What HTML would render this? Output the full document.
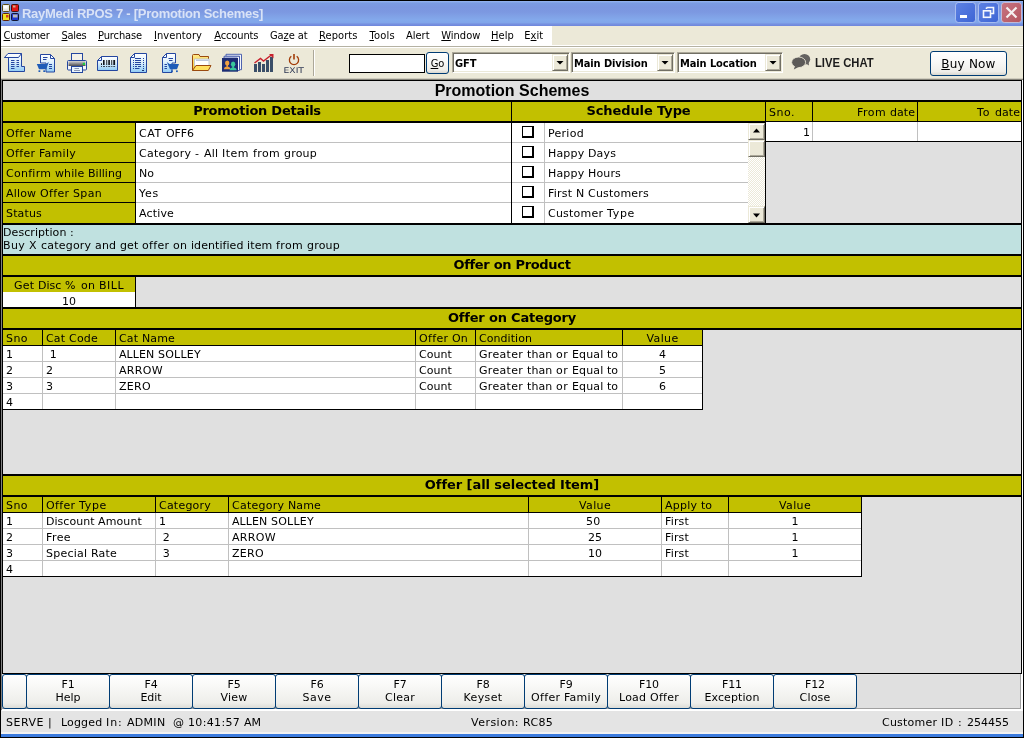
<!DOCTYPE html>
<html>
<head>
<meta charset="utf-8">
<title>RayMedi RPOS 7 - [Promotion Schemes]</title>
<style>
html,body{margin:0;padding:0;}
body{width:1024px;height:738px;overflow:hidden;position:relative;background:#E0E0E0;
  font-family:"DejaVu Sans","Liberation Sans",sans-serif;font-size:11px;color:#000;will-change:transform;}
.bx{position:absolute;box-sizing:border-box;}
.t{position:absolute;white-space:pre;font-size:11px;line-height:13px;}
.sh{position:absolute;white-space:pre;font:bold 13px/19px "DejaVu Sans","Liberation Sans",sans-serif;}
.mi{position:absolute;white-space:pre;top:29px;letter-spacing:-0.2px;font:11px/14px "DejaVu Sans Condensed","Liberation Sans",sans-serif;}
.mi u{text-decoration:underline;text-underline-offset:1px;}
.fb{position:absolute;box-sizing:border-box;top:674px;height:35px;border:1px solid #003C74;border-radius:3px;
  background:linear-gradient(#ffffff 0%,#f7f7f5 40%,#eeeeea 85%,#dcdcd6 100%);text-align:center;font-size:11px;line-height:13px;padding-top:3px;white-space:pre;}
svg{position:absolute;overflow:visible;}
.ttl{position:absolute;white-space:pre;left:22px;top:5px;font:bold 13px/18px "Liberation Sans",sans-serif;letter-spacing:-0.27px;color:#d9e3f7;}
.pst{position:absolute;white-space:pre;left:3px;top:81px;width:1018px;text-align:center;font:bold 16px/19px "Liberation Sans",sans-serif;}
.cb{position:absolute;box-sizing:border-box;height:21px;top:52px;background:#fff;border:1px solid;border-color:#ACA899 #fff #fff #ACA899;box-shadow:inset 1px 1px 0 #716F64,inset -1px -1px 0 #ECE9D8;}
.cbt{position:absolute;white-space:pre;top:57px;letter-spacing:-0.1px;font:bold 11px/14px "DejaVu Sans Condensed","Liberation Sans",sans-serif;}
.cbb{position:absolute;box-sizing:border-box;top:54px;width:16px;height:17px;background:#ECE9D8;border:1px solid;border-color:#ECE9D8 #716F64 #716F64 #ECE9D8;box-shadow:inset 1px 1px 0 #fff,inset -1px -1px 0 #ACA899;}
.xb{position:absolute;box-sizing:border-box;border:1px solid #003C74;border-radius:3px;background:linear-gradient(#ffffff 0%,#f8f8f6 45%,#efeee9 85%,#d9d8d0 100%);text-align:center;white-space:pre;}
.w{display:inline-block;white-space:pre;}

</style>
</head>
<body>
<div class="bx" style="left:0px;top:0px;width:1024px;height:26px;background:linear-gradient(#9AB8F3 0px,#86A8E9 1px,#7B9BE2 2.5px,#7B97E0 6px,#7C98E1 11px,#80A1E6 15px,#83A9EC 19px,#81A6EA 21.5px,#7892E1 23px,#6E86DC 25px);border-top:1px solid #000;"></div>
<div class="ttl">RayMedi RPOS 7 - [Promotion Schemes]</div>
<div class="bx" style="left:0px;top:26px;width:1024px;height:20px;background:#ECE9D8;"></div>
<div class="bx" style="left:0px;top:26px;width:552px;height:20px;background:#fff;"></div>
<div class="bx" style="left:552px;top:45px;width:472px;height:1px;background:#fff;"></div>
<div class="mi" style="left:3.5px;letter-spacing:-0.26px"><u>C</u>ustomer</div>
<div class="mi" style="left:61.5px;letter-spacing:-0.28px"><u>S</u>ales</div>
<div class="mi" style="left:98px;letter-spacing:-0.11px"><u>P</u>urchase</div>
<div class="mi" style="left:154px;letter-spacing:0.08px"><u>I</u>nventory</div>
<div class="mi" style="left:214.3px;letter-spacing:-0.14px"><u>A</u>ccounts</div>
<div class="mi" style="left:270px;letter-spacing:-0.09px">Ga<u>z</u>e at</div>
<div class="mi" style="left:319px;letter-spacing:0.09px"><u>R</u>eports</div>
<div class="mi" style="left:369.5px;letter-spacing:0.26px"><u>T</u>ools</div>
<div class="mi" style="left:406px;letter-spacing:0px">Alert</div>
<div class="mi" style="left:441.3px;letter-spacing:0px"><u>W</u>indow</div>
<div class="mi" style="left:491px;letter-spacing:0.1px"><u>H</u>elp</div>
<div class="mi" style="left:524.3px;letter-spacing:0.05px">E<u>x</u>it</div>
<div class="bx" style="left:0px;top:46px;width:1024px;height:34px;background:#ECE9D8;border-top:1px solid #b5b2a3;box-shadow:inset 0 1px 0 #fff;"></div>
<div class="bx" style="left:0px;top:78px;width:1024px;height:1px;background:#CFCCBE;"></div>
<div class="bx" style="left:0px;top:79px;width:1024px;height:1px;background:#85837A;"></div>
<svg style="left:2px;top:4px" width="17" height="17" viewBox="0 0 17 17">
<rect x="0.5" y="0.5" width="7" height="7" rx="1" fill="#e8e8e0" stroke="#5a4a10"/>
<rect x="9.5" y="0.5" width="7" height="7" rx="1" fill="#e01818" stroke="#40100c"/>
<rect x="0.5" y="9.5" width="7" height="7" rx="1" fill="#f0e020" stroke="#60200c"/>
<rect x="9.5" y="9.5" width="7" height="7" rx="1" fill="#2038d0" stroke="#101430"/>
<rect x="11" y="10.5" width="4.5" height="3" fill="#b8b8b8"/>
<rect x="1.5" y="1.5" width="4" height="3" fill="#fff"/>
<rect x="11" y="1.5" width="2.5" height="2" fill="#c8b090"/>
<rect x="4" y="11" width="2.5" height="2.5" fill="#d04020"/>
</svg>
<svg style="left:955px;top:2px" width="21" height="21" viewBox="0 0 21 21"><defs><linearGradient id="g955" x1="0" y1="0" x2="1" y2="1"><stop offset="0" stop-color="#5d82e4"/><stop offset="1" stop-color="#3d64d4"/></linearGradient></defs><rect x="0.5" y="0.5" width="20" height="20" rx="3" fill="url(#g955)" stroke="#dfe8fb" stroke-opacity="0.55"/><rect x="5" y="13" width="7" height="3" fill="#ffffff"/></svg>
<svg style="left:978px;top:2px" width="21" height="21" viewBox="0 0 21 21"><defs><linearGradient id="g978" x1="0" y1="0" x2="1" y2="1"><stop offset="0" stop-color="#5d82e4"/><stop offset="1" stop-color="#3d64d4"/></linearGradient></defs><rect x="0.5" y="0.5" width="20" height="20" rx="3" fill="url(#g978)" stroke="#dfe8fb" stroke-opacity="0.55"/><path d="M8.5 5.500 H15.500 V11.500 H13 M8.500 7 V5.500" fill="none" stroke="#f4f7fd" stroke-width="1.6"/><rect x="5.5" y="8.800" width="7" height="6.500" fill="none" stroke="#f4f7fd" stroke-width="1.6"/></svg>
<svg style="left:1001px;top:2px" width="21" height="21" viewBox="0 0 21 21"><defs><linearGradient id="g1001" x1="0" y1="0" x2="1" y2="1"><stop offset="0" stop-color="#c87482"/><stop offset="1" stop-color="#b4545e"/></linearGradient></defs><rect x="0.5" y="0.5" width="20" height="20" rx="3" fill="url(#g1001)" stroke="#dfe8fb" stroke-opacity="0.55"/><path d="M5.500 5.500 L15.500 15.500 M15.500 5.500 L5.500 15.500" stroke="#f6f0f0" stroke-width="2.2" fill="none"/></svg>
<svg style="left:0px;top:46px" width="330" height="34" viewBox="0 46 330 34">
<defs>
<linearGradient id="lb" x1="0" y1="0" x2="0" y2="1"><stop offset="0" stop-color="#ffffff"/><stop offset="0.45" stop-color="#dff0fc"/><stop offset="1" stop-color="#8fcbf5"/></linearGradient>
<linearGradient id="pg" x1="0" y1="0" x2="0" y2="1"><stop offset="0" stop-color="#d4d4d6"/><stop offset="1" stop-color="#4c4c50"/></linearGradient>
<linearGradient id="fy" x1="0" y1="0" x2="0" y2="1"><stop offset="0" stop-color="#ffe98a"/><stop offset="1" stop-color="#f8c830"/></linearGradient>
</defs>
<!-- 1 scroll -->
<path d="M8.500 57.500 V71.500 H24.500 V66.500 H21.500 V53.500 H8 L4.500 57.500 Z" fill="url(#lb)" stroke="#2446A0" stroke-linejoin="round"/>
<path d="M4.500 57.500 H18.500 L21.500 53.500" fill="none" stroke="#2446A0"/>
<path d="M11 60.500 H14.500 M16.500 60.500 H19 M11 62.500 H14.500 M16.500 62.500 H19 M11 64.500 H14.500 M16.500 64.500 H19 M11 66.500 H14.500 M16.500 66.500 H19 M11 68.500 H14.500" stroke="#2446A0"/>
<!-- 2 doc + cart -->
<path d="M40.500 54.500 H50.500 L54.500 58.500 V72 H46 V63 H40.500 Z" fill="url(#lb)" stroke="#2446A0"/>
<path d="M50.500 54.500 V58.500 H54.500" fill="none" stroke="#2446A0"/>
<path d="M43 57.500 H47.500 M43 59.500 H46.500 M49 64.500 H52 M49 66.500 H52 M49 68.500 H52" stroke="#2446A0"/>
<path d="M36.800 64 H46 L48.800 62 L46.200 69.300 H39 Z" fill="#1F5CB8"/>
<rect x="38.500" y="70.300" width="1.800" height="1.700" fill="#1F5CB8"/><rect x="43.300" y="70.300" width="1.800" height="1.700" fill="#1F5CB8"/>
<!-- 3 printer -->
<rect x="71.500" y="53.500" width="11" height="8" fill="#F3F1E8" stroke="#2446A0"/>
<rect x="67.500" y="60.500" width="19" height="9.500" rx="1" fill="#f4f6fa" stroke="#2446A0"/>
<rect x="68.500" y="61" width="17" height="5" fill="url(#pg)"/>
<rect x="71.500" y="60" width="11" height="1" fill="#2446A0"/>
<rect x="82.800" y="62.800" width="2.200" height="2.200" fill="#20cc40"/>
<rect x="71.500" y="66.500" width="11" height="6" fill="#eaf5fd" stroke="#2446A0"/>
<path d="M74.500 68.500 H79 M74 70.500 H80" stroke="#8c98b4"/>
<!-- 4 barcode -->
<path d="M101.500 56.500 H117.500 V70.500 H97.500 V60.500 Z" fill="url(#lb)" stroke="#2446A0" stroke-linejoin="round"/>
<path d="M101.500 56.500 V60.500 H97.500" fill="none" stroke="#2446A0"/>
<path d="M103 60 h1.600 v5 h-1.600 Z M106.300 60 h0.900 v5 h-0.900 Z M108.300 60 h1.600 v5 h-1.600 Z M111.300 60 h0.900 v5 h-0.900 Z M113.300 60 h1.800 v5 h-1.800 Z M101 63.200 h1 v1.800 h-1 Z" fill="#10141c"/>
<path d="M101 66.200 h1 v0.900 h-1 Z M103 66.200 h2 v0.900 h-2 Z M106 66.200 h1.200 v0.900 h-1.200 Z M108.200 66.200 h2 v0.900 h-2 Z M111.200 66.200 h1.200 v0.900 h-1.200 Z M113.300 66.200 h1.800 v0.900 h-1.800 Z" fill="#10141c"/>
<!-- 5 doc list -->
<path d="M134.500 53.500 H146.500 V72.500 H130.500 V57.500 Z" fill="url(#lb)" stroke="#2446A0"/>
<path d="M134.500 53.500 V57.500 H130.500" fill="none" stroke="#2446A0"/>
<path d="M135 58.500 H141 M135 60.500 H141 M135 62.500 H141 M135 64.500 H141 M135 66.500 H137 M138 66.500 H141 M135 68.500 H139.500" stroke="#2446A0"/>
<path d="M133 60.500 h1 M133 62.500 h1 M133 64.500 h1 M133 66.500 h1 M133 68.500 h1 M143 58.500 h1 M143 60.500 h1 M143 62.500 h1 M143 64.500 h1 M143 66.500 h1 M143 68.500 h1" stroke="#2446A0"/>
<path d="M142 70.500 H144" stroke="#1a3070"/>
<!-- 6 doc + cart right -->
<path d="M166.500 53.500 H175.500 V63 H172 V72.500 H162.500 V57.500 Z" fill="url(#lb)" stroke="#2446A0"/>
<path d="M166.500 53.500 V57.500 H162.500" fill="none" stroke="#2446A0"/>
<path d="M168.500 58.500 H173 M169 60.500 H172.500 M164.500 64.500 H167 M164.500 66.500 H167 M164.500 68.500 H167" stroke="#2446A0"/>
<path d="M166.800 62 L169.500 64 H179 L177 69.300 H170 Z" fill="#1F5CB8"/>
<rect x="171" y="70.400" width="1.800" height="1.700" fill="#1F5CB8"/><rect x="176" y="70.400" width="1.800" height="1.700" fill="#1F5CB8"/>
<!-- 7 folder -->
<path d="M192.500 70.500 V55.500 Q192.500 54.500 193.500 54.500 H199 L200 56.500 H208.500 V62" fill="url(#fy)" stroke="#9A4A10"/>
<path d="M194.500 59 H209 V66 H194.500 Z" fill="#fff" stroke="#b4c0d4" stroke-width="0.800"/>
<path d="M196 60.300 H208.500" stroke="#98a8c8" stroke-width="0.800"/>
<path d="M192.500 70.500 L196 65.500 H211 L208.300 70.500 Z" fill="#ffe060" stroke="#9A4A10" stroke-linejoin="round"/>
<!-- 8 users -->
<path d="M226 54.300 H241.500 V69.700 H239.500 V56.300 H226 Z" fill="#f4f6fc" stroke="#3C54A8" stroke-width="0.900"/>
<path d="M224 56.300 H239.500 V70.500 H237.500 V58 H224 Z" fill="#f4f6fc" stroke="#3C54A8" stroke-width="0.900"/>
<rect x="222" y="58" width="16" height="13.700" fill="#1C2C74"/>
<ellipse cx="227.200" cy="63" rx="2.200" ry="2.600" fill="#F0A040"/><path d="M226.400 65 h1.600 v1.800 h-1.600 Z" fill="#F0A040"/><path d="M224 69.300 Q224 66.600 227.200 66.600 Q230.200 66.600 230.200 69.300 Z" fill="#F0A040"/>
<ellipse cx="233.100" cy="64.200" rx="2.200" ry="2.600" fill="#38C89C"/><path d="M232.300 66 h1.600 v2 h-1.600 Z" fill="#38C89C"/><path d="M229.600 70.300 Q229.600 67.600 233.100 67.600 Q236.600 67.600 236.600 70.300 Z" fill="#38C89C"/>
<!-- 9 chart -->
<path d="M255.500 72 V64 M259.500 72 V62 M263.500 72 V64 M267.500 72 V60 M271.500 72 V57" stroke="#3A4E68" stroke-width="3"/>
<path d="M254.500 63 L260.500 58.500 L263.500 61 L272 54.500" fill="none" stroke="#C8202C" stroke-width="1.400"/>
<path d="M269 54 H273.500 V58.500 Z" fill="#C8202C"/>
<!-- 10 exit -->
<path d="M291.300 56.300 A4.600 4.600 0 1 0 296.700 56.300" fill="none" stroke="#A23C08" stroke-width="1.300"/>
<path d="M294 54 V59.500" stroke="#A23C08" stroke-width="1.600"/>
<text x="283.500" y="73" font-family="'DejaVu Sans','Liberation Sans',sans-serif" font-size="7.800" fill="#2c3652" textLength="20.500" lengthAdjust="spacingAndGlyphs">EXIT</text>
<!-- separator -->
<path d="M313.500 50 V76" stroke="#ACA899"/><path d="M314.500 50 V76" stroke="#fff"/>
</svg>
<div class="bx" style="left:349px;top:54px;width:76px;height:19px;background:#fff;border:1px solid #000;"></div>
<div class="xb" style="left:426px;top:52px;width:23px;height:22px;font:11px/21px 'DejaVu Sans Condensed','Liberation Sans',sans-serif;"><u>G</u>o</div>
<div class="cb" style="left:452px;width:118px;"></div>
<div class="cbt" style="left:455px;">GFT</div>
<div class="cbb" style="left:552px;"></div>
<svg style="left:552px;top:54px" width="16" height="17"><path d="M4.5 7 H11.500 L8 10.500 Z" fill="#000"/></svg>
<div class="cb" style="left:571px;width:104px;"></div>
<div class="cbt" style="left:574px;">Main Division</div>
<div class="cbb" style="left:657px;"></div>
<svg style="left:657px;top:54px" width="16" height="17"><path d="M4.5 7 H11.500 L8 10.500 Z" fill="#000"/></svg>
<div class="cb" style="left:677px;width:106px;"></div>
<div class="cbt" style="left:680px;">Main Location</div>
<div class="cbb" style="left:765px;"></div>
<svg style="left:765px;top:54px" width="16" height="17"><path d="M4.5 7 H11.500 L8 10.500 Z" fill="#000"/></svg>
<svg style="left:790px;top:52px" width="24" height="22" viewBox="790 52 24 22">
<ellipse cx="804.500" cy="59.200" rx="5.700" ry="5.300" fill="#646260"/><path d="M805 63 L809 65.600 L808.500 61 Z" fill="#646260"/>
<ellipse cx="798.600" cy="62.300" rx="7" ry="5.300" fill="#5c5a58" stroke="#ECE9D8" stroke-width="0.900"/><path d="M795 66 L793.800 69.500 L799 66.800 Z" fill="#5c5a58"/>
</svg>
<div class="t" style="left:815px;top:56px;font:bold 12.5px/15px 'Liberation Sans',sans-serif;color:#1c1c1c;transform-origin:0 0;transform:scaleX(0.9);">LIVE CHAT</div>
<div class="xb" style="left:930px;top:51px;width:77px;height:25px;font:12px/24px 'DejaVu Sans','Liberation Sans',sans-serif;letter-spacing:0.2px;"><u>B</u>uy Now</div>
<div class="bx" style="left:2px;top:80px;width:1020px;height:594px;background:#E0E0E0;border:1px solid #000;"></div>
<div class="bx" style="left:1px;top:79px;width:1px;height:631px;background:#808080;"></div>
<div class="bx" style="left:1022px;top:80px;width:1px;height:631px;background:#fff;"></div>
<div class="pst">Promotion Schemes</div>
<div class="bx" style="left:3px;top:100px;width:1018px;height:2px;background:#000;"></div>
<div class="bx" style="left:3px;top:102px;width:1018px;height:19px;background:#C2C000;"></div>
<div class="sh" style="left:3px;top:101px;width:508px;text-align:center;letter-spacing:-0.25px;">Promotion Details</div>
<div class="sh" style="left:512px;top:101px;width:253px;text-align:center;letter-spacing:-0.1px;">Schedule Type</div>
<div class="t" style="left:769px;top:106px;"><span class="w" style="width:26px;letter-spacing:0.500px">Sno.</span></div>
<div class="t" style="left:813px;top:106px;width:102px;text-align:right;"><span class="w" style="width:33px;letter-spacing:0.447px">From </span><span class="w" style="width:25px;letter-spacing:0.051px">date</span></div>
<div class="t" style="left:918px;top:106px;width:102px;text-align:right;"><span class="w" style="width:18px;letter-spacing:0.974px">To </span><span class="w" style="width:25px;letter-spacing:0.051px">date</span></div>
<div class="bx" style="left:511px;top:102px;width:1px;height:122px;background:#000;"></div>
<div class="bx" style="left:765px;top:102px;width:1px;height:122px;background:#000;"></div>
<div class="bx" style="left:812px;top:102px;width:1px;height:19px;background:#000;"></div>
<div class="bx" style="left:917px;top:102px;width:1px;height:19px;background:#000;"></div>
<div class="bx" style="left:3px;top:121px;width:763px;height:2px;background:#000;"></div>
<div class="bx" style="left:766px;top:121px;width:255px;height:1px;background:#000;"></div>
<div class="bx" style="left:3px;top:123px;width:132px;height:100px;background:#C2C000;"></div>
<div class="bx" style="left:135px;top:123px;width:1px;height:100px;background:#000;"></div>
<div class="bx" style="left:136px;top:123px;width:375px;height:100px;background:#fff;"></div>
<div class="bx" style="left:512px;top:123px;width:236px;height:100px;background:#fff;"></div>
<div class="bx" style="left:544px;top:123px;width:1px;height:100px;background:#C0C0C0;"></div>
<div class="bx" style="left:3px;top:142px;width:133px;height:1px;background:#000;"></div>
<div class="bx" style="left:136px;top:142px;width:375px;height:1px;background:#C0C0C0;"></div>
<div class="bx" style="left:512px;top:142px;width:236px;height:1px;background:#C0C0C0;"></div>
<div class="t" style="left:6px;top:127px;"><span class="w" style="width:33px;letter-spacing:0.331px">Offer </span><span class="w" style="width:33px;letter-spacing:0.137px">Name</span></div>
<div class="t" style="left:139px;top:127px;"><span class="w" style="width:27px;letter-spacing:0.605px">CAT </span><span class="w" style="width:28px;letter-spacing:-0.078px">OFF6</span></div>
<div class="t" style="left:548px;top:127px;"><span class="w" style="width:36px;letter-spacing:0.281px">Period</span></div>
<div class="bx" style="left:522px;top:126px;width:12px;height:12px;background:#fff;border:1px solid #000;border-right-width:2px;border-bottom-width:2px;"></div>
<div class="bx" style="left:3px;top:162px;width:133px;height:1px;background:#000;"></div>
<div class="bx" style="left:136px;top:162px;width:375px;height:1px;background:#C0C0C0;"></div>
<div class="bx" style="left:512px;top:162px;width:236px;height:1px;background:#C0C0C0;"></div>
<div class="t" style="left:6px;top:147px;"><span class="w" style="width:33px;letter-spacing:0.331px">Offer </span><span class="w" style="width:37px;letter-spacing:0.266px">Family</span></div>
<div class="t" style="left:139px;top:147px;"><span class="w" style="width:56px;letter-spacing:0.250px">Category </span><span class="w" style="width:9px;letter-spacing:0.766px">- </span><span class="w" style="width:18px;letter-spacing:0.211px">All </span><span class="w" style="width:31px;letter-spacing:0.491px">Item </span><span class="w" style="width:31px;letter-spacing:0.378px">from </span><span class="w" style="width:33px;letter-spacing:0.209px">group</span></div>
<div class="t" style="left:548px;top:147px;"><span class="w" style="width:40px;letter-spacing:0.169px">Happy </span><span class="w" style="width:28px;letter-spacing:0.137px">Days</span></div>
<div class="bx" style="left:522px;top:146px;width:12px;height:12px;background:#fff;border:1px solid #000;border-right-width:2px;border-bottom-width:2px;"></div>
<div class="bx" style="left:3px;top:182px;width:133px;height:1px;background:#000;"></div>
<div class="bx" style="left:136px;top:182px;width:375px;height:1px;background:#C0C0C0;"></div>
<div class="bx" style="left:512px;top:182px;width:236px;height:1px;background:#C0C0C0;"></div>
<div class="t" style="left:6px;top:167px;"><span class="w" style="width:49px;letter-spacing:0.268px">Confirm </span><span class="w" style="width:33px;letter-spacing:0.107px">while </span><span class="w" style="width:34px;letter-spacing:0.036px">Billing</span></div>
<div class="t" style="left:139px;top:167px;"><span class="w" style="width:15px;letter-spacing:0.016px">No</span></div>
<div class="t" style="left:548px;top:167px;"><span class="w" style="width:40px;letter-spacing:0.169px">Happy </span><span class="w" style="width:33px;letter-spacing:0.156px">Hours</span></div>
<div class="bx" style="left:522px;top:166px;width:12px;height:12px;background:#fff;border:1px solid #000;border-right-width:2px;border-bottom-width:2px;"></div>
<div class="bx" style="left:3px;top:202px;width:133px;height:1px;background:#000;"></div>
<div class="bx" style="left:136px;top:202px;width:375px;height:1px;background:#C0C0C0;"></div>
<div class="bx" style="left:512px;top:202px;width:236px;height:1px;background:#C0C0C0;"></div>
<div class="t" style="left:6px;top:187px;"><span class="w" style="width:34px;letter-spacing:0.185px">Allow </span><span class="w" style="width:33px;letter-spacing:0.331px">Offer </span><span class="w" style="width:29px;letter-spacing:0.332px">Span</span></div>
<div class="t" style="left:139px;top:187px;"><span class="w" style="width:20px;letter-spacing:0.745px">Yes</span></div>
<div class="t" style="left:548px;top:187px;"><span class="w" style="width:28px;letter-spacing:0.224px">First </span><span class="w" style="width:12px;letter-spacing:0.133px">N </span><span class="w" style="width:61px;letter-spacing:0.203px">Customers</span></div>
<div class="bx" style="left:522px;top:186px;width:12px;height:12px;background:#fff;border:1px solid #000;border-right-width:2px;border-bottom-width:2px;"></div>
<div class="t" style="left:6px;top:207px;"><span class="w" style="width:36px;letter-spacing:0.159px">Status</span></div>
<div class="t" style="left:139px;top:207px;"><span class="w" style="width:35px;letter-spacing:0.159px">Active</span></div>
<div class="t" style="left:548px;top:207px;"><span class="w" style="width:59px;letter-spacing:0.229px">Customer </span><span class="w" style="width:28px;letter-spacing:0.684px">Type</span></div>
<div class="bx" style="left:522px;top:206px;width:12px;height:12px;background:#fff;border:1px solid #000;border-right-width:2px;border-bottom-width:2px;"></div>
<div class="bx" style="left:748px;top:123px;width:17px;height:100px;background:#F4F3EC;background-image:repeating-conic-gradient(#ffffff 0% 25%,#ECE9D8 0% 50%);background-size:2px 2px;"></div>
<div class="bx" style="left:748px;top:123px;width:17px;height:17px;background:#ECE9D8;border:1px solid;border-color:#ECE9D8 #716F64 #716F64 #ECE9D8;box-shadow:inset 1px 1px 0 #fff,inset -1px -1px 0 #ACA899;"></div>
<div class="bx" style="left:748px;top:140px;width:17px;height:17px;background:#ECE9D8;border:1px solid;border-color:#ECE9D8 #716F64 #716F64 #ECE9D8;box-shadow:inset 1px 1px 0 #fff,inset -1px -1px 0 #ACA899;"></div>
<div class="bx" style="left:748px;top:206px;width:17px;height:17px;background:#ECE9D8;border:1px solid;border-color:#ECE9D8 #716F64 #716F64 #ECE9D8;box-shadow:inset 1px 1px 0 #fff,inset -1px -1px 0 #ACA899;"></div>
<svg style="left:748px;top:123px" width="17" height="17"><path d="M5 9.5 L8.5 5.5 L12 9.5 Z" fill="#000"/></svg>
<svg style="left:748px;top:206px" width="17" height="17"><path d="M5 7.5 L8.5 11.5 L12 7.5 Z" fill="#000"/></svg>
<div class="bx" style="left:766px;top:122px;width:255px;height:19px;background:#fff;"></div>
<div class="bx" style="left:812px;top:122px;width:1px;height:19px;background:#C0C0C0;"></div>
<div class="bx" style="left:917px;top:122px;width:1px;height:19px;background:#C0C0C0;"></div>
<div class="bx" style="left:766px;top:141px;width:255px;height:1px;background:#000;"></div>
<div class="t" style="left:766px;top:126px;width:44px;text-align:right;"><span class="w" style="width:7px;letter-spacing:0.000px">1</span></div>
<div class="bx" style="left:3px;top:223px;width:1018px;height:2px;background:#000;"></div>
<div class="bx" style="left:3px;top:225px;width:1018px;height:29px;background:#C0E1E0;"></div>
<div class="t" style="left:3px;top:226px;"><span class="w" style="width:67px;letter-spacing:0.070px">Description </span><span class="w" style="width:5px;letter-spacing:1.297px">:</span></div>
<div class="t" style="left:3px;top:239px;"><span class="w" style="width:26px;letter-spacing:0.367px">Buy </span><span class="w" style="width:12px;letter-spacing:0.484px">X </span><span class="w" style="width:54px;letter-spacing:0.210px">category </span><span class="w" style="width:25px;letter-spacing:0.203px">and </span><span class="w" style="width:22px;letter-spacing:0.109px">get </span><span class="w" style="width:31px;letter-spacing:0.318px">offer </span><span class="w" style="width:18px;letter-spacing:0.266px">on </span><span class="w" style="width:56px;letter-spacing:0.061px">identified </span><span class="w" style="width:29px;letter-spacing:0.128px">item </span><span class="w" style="width:31px;letter-spacing:0.378px">from </span><span class="w" style="width:33px;letter-spacing:0.209px">group</span></div>
<div class="bx" style="left:3px;top:254px;width:1018px;height:2px;background:#000;"></div>
<div class="bx" style="left:3px;top:256px;width:1018px;height:19px;background:#C2C000;"></div>
<div class="sh" style="left:3px;top:255px;width:1018px;text-align:center;letter-spacing:-0.32px;">Offer on Product</div>
<div class="bx" style="left:3px;top:275px;width:1018px;height:2px;background:#000;"></div>
<div class="bx" style="left:3px;top:277px;width:132px;height:15px;background:#C2C000;"></div>
<div class="bx" style="left:3px;top:292px;width:132px;height:15px;background:#fff;"></div>
<div class="bx" style="left:135px;top:277px;width:1px;height:30px;background:#000;"></div>
<div class="t" style="left:3px;top:279px;width:132px;text-align:center;"><span class="w" style="width:24px;letter-spacing:0.223px">Get </span><span class="w" style="width:27px;letter-spacing:0.037px">Disc </span><span class="w" style="width:16px;letter-spacing:1.023px">% </span><span class="w" style="width:18px;letter-spacing:0.266px">on </span><span class="w" style="width:25px;letter-spacing:0.488px">BILL</span></div>
<div class="t" style="left:3px;top:295px;width:132px;text-align:center;"><span class="w" style="width:14px;letter-spacing:0.000px">10</span></div>
<div class="bx" style="left:3px;top:307px;width:1018px;height:2px;background:#000;"></div>
<div class="bx" style="left:3px;top:309px;width:1018px;height:19px;background:#C2C000;"></div>
<div class="sh" style="left:3px;top:308px;width:1018px;text-align:center;letter-spacing:-0.18px;">Offer on Category</div>
<div class="bx" style="left:3px;top:328px;width:1018px;height:2px;background:#000;"></div>
<div class="bx" style="left:3px;top:330px;width:699px;height:15px;background:#C2C000;"></div>
<div class="bx" style="left:3px;top:345px;width:699px;height:64px;background:#fff;"></div>
<div class="bx" style="left:42px;top:330px;width:1px;height:15px;background:#000;"></div>
<div class="bx" style="left:42px;top:345px;width:1px;height:64px;background:#C0C0C0;"></div>
<div class="bx" style="left:115px;top:330px;width:1px;height:15px;background:#000;"></div>
<div class="bx" style="left:115px;top:345px;width:1px;height:64px;background:#C0C0C0;"></div>
<div class="bx" style="left:415px;top:330px;width:1px;height:15px;background:#000;"></div>
<div class="bx" style="left:415px;top:345px;width:1px;height:64px;background:#C0C0C0;"></div>
<div class="bx" style="left:475px;top:330px;width:1px;height:15px;background:#000;"></div>
<div class="bx" style="left:475px;top:345px;width:1px;height:64px;background:#C0C0C0;"></div>
<div class="bx" style="left:622px;top:330px;width:1px;height:15px;background:#000;"></div>
<div class="bx" style="left:622px;top:345px;width:1px;height:64px;background:#C0C0C0;"></div>
<div class="bx" style="left:3px;top:361px;width:699px;height:1px;background:#C0C0C0;"></div>
<div class="bx" style="left:3px;top:377px;width:699px;height:1px;background:#C0C0C0;"></div>
<div class="bx" style="left:3px;top:393px;width:699px;height:1px;background:#C0C0C0;"></div>
<div class="bx" style="left:3px;top:345px;width:699px;height:1px;background:#000;"></div>
<div class="bx" style="left:702px;top:330px;width:1px;height:80px;background:#000;"></div>
<div class="bx" style="left:3px;top:409px;width:700px;height:1px;background:#000;"></div>
<div class="t" style="left:6px;top:332px;"><span class="w" style="width:22px;letter-spacing:0.438px">Sno</span></div>
<div class="t" style="left:46px;top:332px;"><span class="w" style="width:23px;letter-spacing:0.191px">Cat </span><span class="w" style="width:29px;letter-spacing:0.207px">Code</span></div>
<div class="t" style="left:119px;top:332px;"><span class="w" style="width:23px;letter-spacing:0.191px">Cat </span><span class="w" style="width:33px;letter-spacing:0.137px">Name</span></div>
<div class="t" style="left:419px;top:332px;"><span class="w" style="width:33px;letter-spacing:0.331px">Offer </span><span class="w" style="width:16px;letter-spacing:0.188px">On</span></div>
<div class="t" style="left:479px;top:332px;"><span class="w" style="width:53px;letter-spacing:0.054px">Condition</span></div>
<div class="t" style="left:623px;top:332px;width:79px;text-align:center;"><span class="w" style="width:32px;letter-spacing:0.359px">Value</span></div>
<div class="t" style="left:6px;top:348px;"><span class="w" style="width:7px;letter-spacing:0.000px">1</span></div>
<div class="t" style="left:46px;top:348px;"><span class="w" style="width:11px;letter-spacing:0.250px"> 1</span></div>
<div class="t" style="left:119px;top:348px;"><span class="w" style="width:39px;letter-spacing:0.089px">ALLEN </span><span class="w" style="width:43px;letter-spacing:0.240px">SOLLEY</span></div>
<div class="t" style="left:419px;top:348px;"><span class="w" style="width:33px;letter-spacing:0.066px">Count</span></div>
<div class="t" style="left:479px;top:348px;"><span class="w" style="width:48px;letter-spacing:0.324px">Greater </span><span class="w" style="width:29px;letter-spacing:0.103px">than </span><span class="w" style="width:16px;letter-spacing:0.417px">or </span><span class="w" style="width:35px;letter-spacing:0.133px">Equal </span><span class="w" style="width:11px;letter-spacing:-0.023px">to</span></div>
<div class="t" style="left:623px;top:348px;width:79px;text-align:center;"><span class="w" style="width:7px;letter-spacing:0.000px">4</span></div>
<div class="t" style="left:6px;top:364px;"><span class="w" style="width:7px;letter-spacing:0.000px">2</span></div>
<div class="t" style="left:46px;top:364px;"><span class="w" style="width:7px;letter-spacing:0.000px">2</span></div>
<div class="t" style="left:119px;top:364px;"><span class="w" style="width:44px;letter-spacing:0.331px">ARROW</span></div>
<div class="t" style="left:419px;top:364px;"><span class="w" style="width:33px;letter-spacing:0.066px">Count</span></div>
<div class="t" style="left:479px;top:364px;"><span class="w" style="width:48px;letter-spacing:0.324px">Greater </span><span class="w" style="width:29px;letter-spacing:0.103px">than </span><span class="w" style="width:16px;letter-spacing:0.417px">or </span><span class="w" style="width:35px;letter-spacing:0.133px">Equal </span><span class="w" style="width:11px;letter-spacing:-0.023px">to</span></div>
<div class="t" style="left:623px;top:364px;width:79px;text-align:center;"><span class="w" style="width:7px;letter-spacing:0.000px">5</span></div>
<div class="t" style="left:6px;top:380px;"><span class="w" style="width:7px;letter-spacing:0.000px">3</span></div>
<div class="t" style="left:46px;top:380px;"><span class="w" style="width:7px;letter-spacing:0.000px">3</span></div>
<div class="t" style="left:119px;top:380px;"><span class="w" style="width:32px;letter-spacing:0.305px">ZERO</span></div>
<div class="t" style="left:419px;top:380px;"><span class="w" style="width:33px;letter-spacing:0.066px">Count</span></div>
<div class="t" style="left:479px;top:380px;"><span class="w" style="width:48px;letter-spacing:0.324px">Greater </span><span class="w" style="width:29px;letter-spacing:0.103px">than </span><span class="w" style="width:16px;letter-spacing:0.417px">or </span><span class="w" style="width:35px;letter-spacing:0.133px">Equal </span><span class="w" style="width:11px;letter-spacing:-0.023px">to</span></div>
<div class="t" style="left:623px;top:380px;width:79px;text-align:center;"><span class="w" style="width:7px;letter-spacing:0.000px">6</span></div>
<div class="t" style="left:6px;top:396px;"><span class="w" style="width:7px;letter-spacing:0.000px">4</span></div>
<div class="bx" style="left:3px;top:474px;width:1018px;height:2px;background:#000;"></div>
<div class="bx" style="left:3px;top:476px;width:1018px;height:19px;background:#C2C000;"></div>
<div class="sh" style="left:3px;top:475px;width:1018px;text-align:center;letter-spacing:-0.07px;">Offer [all selected Item]</div>
<div class="bx" style="left:3px;top:495px;width:1018px;height:2px;background:#000;"></div>
<div class="bx" style="left:3px;top:497px;width:858px;height:15px;background:#C2C000;"></div>
<div class="bx" style="left:3px;top:512px;width:858px;height:64px;background:#fff;"></div>
<div class="bx" style="left:42px;top:497px;width:1px;height:15px;background:#000;"></div>
<div class="bx" style="left:42px;top:512px;width:1px;height:64px;background:#C0C0C0;"></div>
<div class="bx" style="left:155px;top:497px;width:1px;height:15px;background:#000;"></div>
<div class="bx" style="left:155px;top:512px;width:1px;height:64px;background:#C0C0C0;"></div>
<div class="bx" style="left:228px;top:497px;width:1px;height:15px;background:#000;"></div>
<div class="bx" style="left:228px;top:512px;width:1px;height:64px;background:#C0C0C0;"></div>
<div class="bx" style="left:528px;top:497px;width:1px;height:15px;background:#000;"></div>
<div class="bx" style="left:528px;top:512px;width:1px;height:64px;background:#C0C0C0;"></div>
<div class="bx" style="left:661px;top:497px;width:1px;height:15px;background:#000;"></div>
<div class="bx" style="left:661px;top:512px;width:1px;height:64px;background:#C0C0C0;"></div>
<div class="bx" style="left:728px;top:497px;width:1px;height:15px;background:#000;"></div>
<div class="bx" style="left:728px;top:512px;width:1px;height:64px;background:#C0C0C0;"></div>
<div class="bx" style="left:3px;top:528px;width:858px;height:1px;background:#C0C0C0;"></div>
<div class="bx" style="left:3px;top:544px;width:858px;height:1px;background:#C0C0C0;"></div>
<div class="bx" style="left:3px;top:560px;width:858px;height:1px;background:#C0C0C0;"></div>
<div class="bx" style="left:3px;top:512px;width:858px;height:1px;background:#000;"></div>
<div class="bx" style="left:861px;top:497px;width:1px;height:80px;background:#000;"></div>
<div class="bx" style="left:3px;top:576px;width:859px;height:1px;background:#000;"></div>
<div class="t" style="left:6px;top:499px;"><span class="w" style="width:22px;letter-spacing:0.438px">Sno</span></div>
<div class="t" style="left:46px;top:499px;"><span class="w" style="width:33px;letter-spacing:0.331px">Offer </span><span class="w" style="width:28px;letter-spacing:0.684px">Type</span></div>
<div class="t" style="left:159px;top:499px;"><span class="w" style="width:52px;letter-spacing:0.219px">Category</span></div>
<div class="t" style="left:232px;top:499px;"><span class="w" style="width:56px;letter-spacing:0.250px">Category </span><span class="w" style="width:33px;letter-spacing:0.137px">Name</span></div>
<div class="t" style="left:529px;top:499px;width:132px;text-align:center;"><span class="w" style="width:32px;letter-spacing:0.359px">Value</span></div>
<div class="t" style="left:665px;top:499px;"><span class="w" style="width:36px;letter-spacing:0.237px">Apply </span><span class="w" style="width:11px;letter-spacing:-0.023px">to</span></div>
<div class="t" style="left:729px;top:499px;width:132px;text-align:center;"><span class="w" style="width:32px;letter-spacing:0.359px">Value</span></div>
<div class="t" style="left:6px;top:515px;"><span class="w" style="width:7px;letter-spacing:0.000px">1</span></div>
<div class="t" style="left:46px;top:515px;"><span class="w" style="width:52px;letter-spacing:0.023px">Discount </span><span class="w" style="width:44px;letter-spacing:0.128px">Amount</span></div>
<div class="t" style="left:159px;top:515px;"><span class="w" style="width:7px;letter-spacing:0.000px">1</span></div>
<div class="t" style="left:232px;top:515px;"><span class="w" style="width:39px;letter-spacing:0.089px">ALLEN </span><span class="w" style="width:43px;letter-spacing:0.240px">SOLLEY</span></div>
<div class="t" style="left:529px;top:515px;width:132px;text-align:center;"><span class="w" style="width:18px;letter-spacing:0.167px">50 </span></div>
<div class="t" style="left:665px;top:515px;"><span class="w" style="width:24px;letter-spacing:0.169px">First</span></div>
<div class="t" style="left:729px;top:515px;width:132px;text-align:center;"><span class="w" style="width:7px;letter-spacing:0.000px">1</span></div>
<div class="t" style="left:6px;top:531px;"><span class="w" style="width:7px;letter-spacing:0.000px">2</span></div>
<div class="t" style="left:46px;top:531px;"><span class="w" style="width:25px;letter-spacing:0.414px">Free</span></div>
<div class="t" style="left:159px;top:531px;"><span class="w" style="width:11px;letter-spacing:0.250px"> 2</span></div>
<div class="t" style="left:232px;top:531px;"><span class="w" style="width:44px;letter-spacing:0.331px">ARROW</span></div>
<div class="t" style="left:529px;top:531px;width:132px;text-align:center;"><span class="w" style="width:14px;letter-spacing:0.000px">25</span></div>
<div class="t" style="left:665px;top:531px;"><span class="w" style="width:24px;letter-spacing:0.169px">First</span></div>
<div class="t" style="left:729px;top:531px;width:132px;text-align:center;"><span class="w" style="width:7px;letter-spacing:0.000px">1</span></div>
<div class="t" style="left:6px;top:547px;"><span class="w" style="width:7px;letter-spacing:0.000px">3</span></div>
<div class="t" style="left:46px;top:547px;"><span class="w" style="width:45px;letter-spacing:0.232px">Special </span><span class="w" style="width:26px;letter-spacing:0.195px">Rate</span></div>
<div class="t" style="left:159px;top:547px;"><span class="w" style="width:11px;letter-spacing:0.250px"> 3</span></div>
<div class="t" style="left:232px;top:547px;"><span class="w" style="width:32px;letter-spacing:0.305px">ZERO</span></div>
<div class="t" style="left:529px;top:547px;width:132px;text-align:center;"><span class="w" style="width:14px;letter-spacing:0.000px">10</span></div>
<div class="t" style="left:665px;top:547px;"><span class="w" style="width:24px;letter-spacing:0.169px">First</span></div>
<div class="t" style="left:729px;top:547px;width:132px;text-align:center;"><span class="w" style="width:7px;letter-spacing:0.000px">1</span></div>
<div class="t" style="left:6px;top:563px;"><span class="w" style="width:7px;letter-spacing:0.000px">4</span></div>
<div class="bx" style="left:2px;top:674px;width:1019px;height:35px;background:#E0E0E0;border-right:1px solid #A0A0A0;border-bottom:1px solid #A0A0A0;"></div>
<div class="bx" style="left:2px;top:709px;width:1021px;height:2px;background:#fff;"></div>
<div class="bx" style="left:1021px;top:674px;width:1px;height:35px;background:#fff;"></div>
<div class="fb" style="left:2px;width:25px;"></div>
<div class="fb" style="left:26px;width:84px;"><span class="w" style="width:13px;letter-spacing:-0.164px">F1</span><br><span class="w" style="width:25px;letter-spacing:-0.020px">Help</span></div>
<div class="fb" style="left:109px;width:84px;"><span class="w" style="width:13px;letter-spacing:-0.164px">F4</span><br><span class="w" style="width:21px;letter-spacing:-0.078px">Edit</span></div>
<div class="fb" style="left:192px;width:84px;"><span class="w" style="width:13px;letter-spacing:-0.164px">F5</span><br><span class="w" style="width:27px;letter-spacing:0.219px">View</span></div>
<div class="fb" style="left:275px;width:84px;"><span class="w" style="width:13px;letter-spacing:-0.164px">F6</span><br><span class="w" style="width:29px;letter-spacing:0.500px">Save</span></div>
<div class="fb" style="left:358px;width:84px;"><span class="w" style="width:13px;letter-spacing:-0.164px">F7</span><br><span class="w" style="width:30px;letter-spacing:0.247px">Clear</span></div>
<div class="fb" style="left:441px;width:84px;"><span class="w" style="width:13px;letter-spacing:-0.164px">F8</span><br><span class="w" style="width:39px;letter-spacing:0.372px">Keyset</span></div>
<div class="fb" style="left:524px;width:84px;"><span class="w" style="width:13px;letter-spacing:-0.164px">F9</span><br><span class="w" style="width:33px;letter-spacing:0.331px">Offer </span><span class="w" style="width:37px;letter-spacing:0.266px">Family</span></div>
<div class="fb" style="left:607px;width:84px;"><span class="w" style="width:20px;letter-spacing:-0.109px">F10</span><br><span class="w" style="width:31px;letter-spacing:0.222px">Load </span><span class="w" style="width:29px;letter-spacing:0.297px">Offer</span></div>
<div class="fb" style="left:690px;width:84px;"><span class="w" style="width:20px;letter-spacing:-0.109px">F11</span><br><span class="w" style="width:55px;letter-spacing:0.094px">Exception</span></div>
<div class="fb" style="left:773px;width:84px;"><span class="w" style="width:20px;letter-spacing:-0.109px">F12</span><br><span class="w" style="width:31px;letter-spacing:0.203px">Close</span></div>
<div class="bx" style="left:0px;top:711px;width:1024px;height:23px;background:#E4E4E4;border-bottom:2px solid #F2F2F2;"></div>
<div class="t" style="left:6px;top:716px;"><span class="w" style="width:42px;letter-spacing:0.505px">SERVE </span><span class="w" style="width:13px;letter-spacing:0.766px">|  </span><span class="w" style="width:45px;letter-spacing:0.158px">Logged </span><span class="w" style="width:21px;letter-spacing:0.895px">In: </span><span class="w" style="width:46px;letter-spacing:0.290px">ADMIN  </span><span class="w" style="width:15px;letter-spacing:0.250px">@ </span><span class="w" style="width:56px;letter-spacing:0.344px">10:41:57 </span><span class="w" style="width:17px;letter-spacing:-0.008px">AM</span></div>
<div class="t" style="left:471px;top:716px;"><span class="w" style="width:52px;letter-spacing:0.483px">Version: </span><span class="w" style="width:30px;letter-spacing:0.305px">RC85</span></div>
<div class="t" style="left:882px;top:716px;"><span class="w" style="width:59px;letter-spacing:0.229px">Customer </span><span class="w" style="width:17px;letter-spacing:0.594px">ID </span><span class="w" style="width:9px;letter-spacing:0.898px">: </span><span class="w" style="width:42px;letter-spacing:0.000px">254455</span></div>
<div class="bx" style="left:0px;top:734px;width:1024px;height:3px;background:#3C7BDD;"></div>
<div class="bx" style="left:0px;top:737px;width:1024px;height:1px;background:#000;"></div>
<div class="bx" style="left:0px;top:0px;width:1px;height:738px;background:#000;"></div>
<div class="bx" style="left:1023px;top:0px;width:1px;height:738px;background:#000;"></div>
</body>
</html>
